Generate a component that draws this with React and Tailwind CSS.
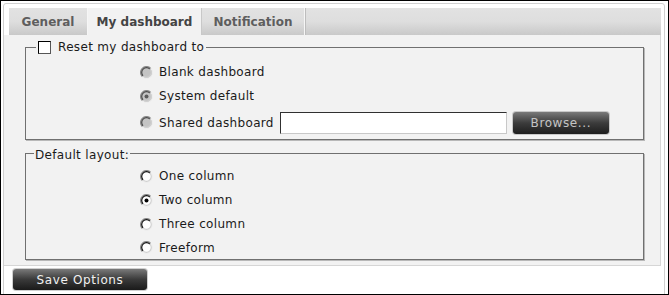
import React from "react";

function Radio({ checked, disabled }) {
  const fill = disabled ? "#c4c4c4" : "#ffffff";
  const dot = disabled ? "#5a5a5a" : "#000000";
  return (
    <svg width="13" height="13" viewBox="0 0 13 13" className="shrink-0">
      <circle cx="6.5" cy="6.5" r="6" fill={fill} />
      <path d="M2.3 10.7 A5.9 5.9 0 0 1 10.7 2.3" fill="none" stroke="#8a8a8a" strokeWidth="1.2" />
      <path d="M10.7 2.3 A5.9 5.9 0 0 1 2.3 10.7" fill="none" stroke="#eeeeee" strokeWidth="1.2" />
      <path d="M3.1 9.9 A4.8 4.8 0 0 1 9.9 3.1" fill="none" stroke={disabled ? "#4a4a4a" : "#101010"} strokeWidth="1.2" />
      <path d="M9.9 3.1 A4.8 4.8 0 0 1 3.1 9.9" fill="none" stroke="#d0d0d0" strokeWidth="1.2" />
      {checked && <circle cx="6.5" cy="6.5" r="2" fill={dot} />}
    </svg>
  );
}

function Row({ children, h = "h-[24px]" }) {
  return <div className={`flex items-center gap-[6px] ${h}`}>{children}</div>;
}

export default function App() {
  return (
    <div className="w-[669px] h-[295px] border border-black bg-white overflow-hidden font-['DejaVu_Sans',Verdana,sans-serif] text-[12px] text-[#1a1a1a]">
      <div className="ml-[2px] mt-[2px] w-[662px] h-[300px] border border-[#d0d0d0] rounded-t-[3px]">
        {/* tab strip */}
        <div className="pt-[4px] pl-[5px] pr-[3px]">
          <div className="flex h-[27px] bg-gradient-to-b from-[#e2e2e2] via-[#dedede] to-[#c9c9c9] font-bold">
            <div className="w-[79px] flex items-center justify-center text-[#5e5e5e] border-r border-[#f6f6f6] shadow-[1px_0_0_#bdbdbd]">
              General
            </div>
            <div className="w-[114px] flex items-center justify-center bg-[#f2f2f2] text-[#444] border-r border-[#c8c8c8]">
              My dashboard
            </div>
            <div className="w-[103px] flex items-center justify-center text-[#5e5e5e] border-r border-[#f6f6f6] shadow-[1px_0_0_#bdbdbd]">
              Notification
            </div>
          </div>
        </div>
        {/* content */}
        <div className="w-[657px] h-[231px] bg-[#f2f2f2] border-r border-b border-[#d6d6d6] pt-[4px] tracking-[0.33px]">
          <fieldset className="ml-[21px] w-[619px] border border-[#707070] shadow-[1px_1px_0_#b8b8b8] pl-[114px] pb-[2px]">
            <legend className="ml-[-104px] px-[2px] h-[16px] flex items-center gap-[7px]">
              <span className="w-[13px] h-[13px] bg-white border border-black border-r-[#555] border-b-[#555] shrink-0" />
              <span>Reset my dashboard to</span>
            </legend>
            <div className="pt-[5px]">
              <Row>
                <Radio disabled />
                <span>Blank dashboard</span>
              </Row>
              <Row>
                <Radio disabled checked />
                <span>System default</span>
              </Row>
              <Row h="h-[29px]">
                <Radio disabled />
                <span>Shared dashboard</span>
                <div className="ml-0 w-[227px] h-[22px] bg-white border border-[#303030] border-r-[#c8c8c8] border-b-[#c8c8c8]" />
                <div className="ml-0 w-[96px] h-[22px] rounded-[3px] bg-gradient-to-b from-[#7a7a7a] via-[#3c3c3c] to-[#1e1e1e] shadow-[0_0_0_1px_#c8c8c8] flex items-center justify-center text-[#c4c4c4] tracking-[0.6px]">
                  Browse...
                </div>
              </Row>
            </div>
          </fieldset>
          <fieldset className="mt-[5px] ml-[21px] w-[619px] border border-[#707070] shadow-[1px_1px_0_#b8b8b8] pl-[114px]">
            <legend className="ml-[-106px] px-[1px] h-[16px] pt-[3px] flex items-center">
              Default layout:
            </legend>
            <div className="pt-[3px]">
              <Row>
                <Radio />
                <span>One column</span>
              </Row>
              <Row>
                <Radio checked />
                <span>Two column</span>
              </Row>
              <Row>
                <Radio />
                <span>Three column</span>
              </Row>
              <Row h="h-[23px]">
                <Radio />
                <span>Freeform</span>
              </Row>
            </div>
          </fieldset>
        </div>
        <div className="ml-[9px] mt-[3px] w-[134px] h-[21px] rounded-[3px] bg-gradient-to-b from-[#7a7a7a] via-[#3a3a3a] to-[#1a1a1a] shadow-[0_0_0_1px_#cfcfcf] flex items-center justify-center text-[#f0f0f0] tracking-[0.6px]">
          Save Options
        </div>
      </div>
    </div>
  );
}
